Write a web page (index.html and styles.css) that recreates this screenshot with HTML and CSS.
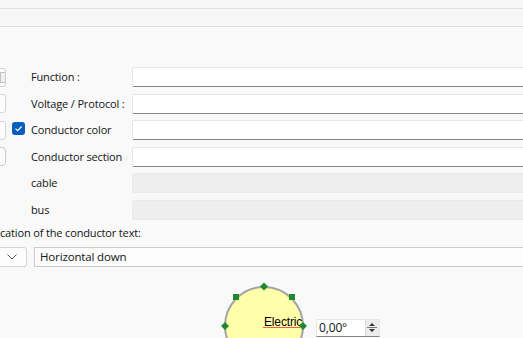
FILE: index.html
```html
<!DOCTYPE html>
<html lang="en">
  <head>
    <meta charset="UTF-8" />
    <title>Conductor properties</title>
    <link rel="stylesheet" href="styles.css">
  </head>
  <body>
    <div class="toolbar"></div>
    <div class="tabbar"></div>

    <main class="panel">
      <div class="form">
        <div class="side side-spin"><span class="spin-mark"></span></div>
        <div class="check-cell"></div>
        <label class="label">Function :</label>
        <input class="field" type="text">

        <div class="side"></div>
        <div class="check-cell"></div>
        <label class="label">Voltage / Protocol :</label>
        <input class="field" type="text">

        <div class="side"></div>
        <div class="check-cell"><span class="checkbox">
          <svg width="13" height="13" viewBox="0 0 13 13"><path d="M3.5 6.7 L5.6 8.7 L9.6 4.5" fill="none" stroke="#fff" stroke-width="1.1"/></svg>
        </span></div>
        <label class="label">Conductor color</label>
        <input class="field" type="text">

        <div class="side side-round"></div>
        <div class="check-cell"></div>
        <label class="label">Conductor section</label>
        <input class="field" type="text">

        <div class="blank"></div>
        <div class="check-cell"></div>
        <label class="label">cable</label>
        <input class="field field-off" type="text" disabled>

        <div class="blank"></div>
        <div class="check-cell"></div>
        <label class="label">bus</label>
        <input class="field field-off" type="text" disabled>
      </div>

      <p class="caption">cation of the conductor text:</p>

      <div class="orient-row">
        <div class="combo">
          <svg width="10" height="6" viewBox="0 0 10 6"><path d="M0.5 0.5 L5 5 L9.5 0.5" fill="none" stroke="#555" stroke-width="1"/></svg>
        </div>
        <div class="orient-field">Horizontal down</div>
      </div>

      <div class="preview">
        <svg class="shape" width="523" height="80" viewBox="0 0 523 80">
          <circle cx="264" cy="59" r="39" fill="#ffffa9" stroke="#a2a6a6" stroke-width="2"/>
          <text x="264" y="59" font-family="Liberation Sans, Arial, sans-serif" font-size="12" fill="#000">Electric</text>
          <path d="M263 60.5 L300 60.5" stroke="#e8604a" stroke-width="1"/>
          <g fill="#1e8a2e">
            <path d="M264 15.5 L268 19.5 L264 23.5 L260 19.5 Z"/>
            <rect x="233" y="27" width="6" height="6"/>
            <rect x="289" y="27" width="6" height="6"/>
            <path d="M225 55 L229 59 L225 63 L221 59 Z"/>
            <path d="M303 55 L307 59 L303 63 L299 59 Z"/>
          </g>
        </svg>
        <div class="angle">
          <span class="angle-value">0,00°</span>
          <span class="angle-buttons">
            <svg width="12" height="15" viewBox="0 0 12 15"><path d="M3 6 L6 3 L9 6 Z M3 9 L9 9 L6 12 Z" fill="#333"/><path d="M1 7.5 L11 7.5" stroke="#777" stroke-width="1"/></svg>
          </span>
        </div>
      </div>
    </main>
  </body>
</html>
```

FILE: styles.css
```css
/* Reset */
* {
  margin: 0;
  padding: 0;
  box-sizing: border-box;
}

body {
  width: 523px;
  height: 338px;
  overflow: hidden;
  background-color: #f9f9f9;
  font-family: "Open Sans", "Noto Sans", sans-serif;
  font-size: 11px;
  letter-spacing: -0.15px;
  color: #141414;
}

/* Top bars */
.toolbar {
  height: 9px;
  background-color: #f7f7f7;
  border-bottom: 1px solid #e1e1e1;
}

.tabbar {
  height: 18px;
  background-color: #f7f7f7;
  border-bottom: 1px solid #dcdcdc;
}

/* Form panel, shifted left as in the scrolled dock */
.panel {
  margin-left: -20px;
  width: 560px;
}

.form {
  display: grid;
  grid-template-columns: 26px 12px 95px 1fr;
  grid-auto-rows: 20px;
  column-gap: 6px;
  row-gap: 6.6px;
  padding-top: 40px;
  align-items: center;
}

.form .label {
  padding-left: 1px;
  margin-top: -1px;
  white-space: nowrap;
}

.side {
  height: 19px;
  background-color: #fdfdfd;
  border: 1px solid #d6d6d6;
  border-radius: 3px;
}

.side-spin {
  position: relative;
  border-color: #cfcfcf;
}

.spin-mark {
  position: absolute;
  right: 0;
  top: 3px;
  width: 5px;
  height: 11px;
  border: 1px solid #c4c4c4;
  border-right: none;
  background-color: #f0f0f0;
}

.side-round {
  border-radius: 4px;
  border-color: #cbcbcb;
}

.check-cell {
  display: flex;
  align-items: center;
  margin-top: -3px;
}

.checkbox {
  display: flex;
  width: 13px;
  height: 13px;
  background-color: #0a5fbd;
  border-radius: 3px;
}

.field {
  height: 20px;
  margin-left: 1px;
  background-color: #ffffff;
  border: 1px solid #e6e6e6;
  border-bottom: 1px solid #858585;
  border-radius: 2px;
  outline: none;
}

.field-off {
  background-color: #eeeeee;
  border: 1px solid #e9e9e9;
}

/* Text location */
.caption {
  margin-top: 5px;
  padding-left: 20px;
  line-height: 16px;
}

.orient-row {
  display: flex;
  gap: 7px;
  margin-top: 6px;
  height: 20px;
}

.combo {
  width: 47px;
  display: flex;
  align-items: center;
  justify-content: flex-end;
  padding-right: 9px;
  background-color: #fdfdfd;
  border: 1px solid #d4d4d4;
  border-radius: 3px;
}

.orient-field {
  flex: 1;
  padding-left: 5px;
  line-height: 18px;
  font-size: 11.5px;
  background-color: #fcfcfc;
  border: 1px solid #cbcbcb;
}

/* Preview canvas */
.preview {
  position: relative;
  height: 80px;
}

.shape {
  position: absolute;
  left: 20px;
  top: 0;
}

.angle {
  position: absolute;
  left: 336px;
  top: 52px;
  display: flex;
  height: 18px;
  width: 64px;
  background-color: #ffffff;
  border: 1px solid #e6e6e6;
  border-bottom: 1px solid #858585;
}

.angle-value {
  flex: 1;
  padding-left: 2px;
  line-height: 16px;
  font-size: 12px;
}

.angle-buttons {
  display: flex;
  align-items: center;
  width: 14px;
  background-color: #ececec;
  border-left: 1px solid #dadada;
}
```
